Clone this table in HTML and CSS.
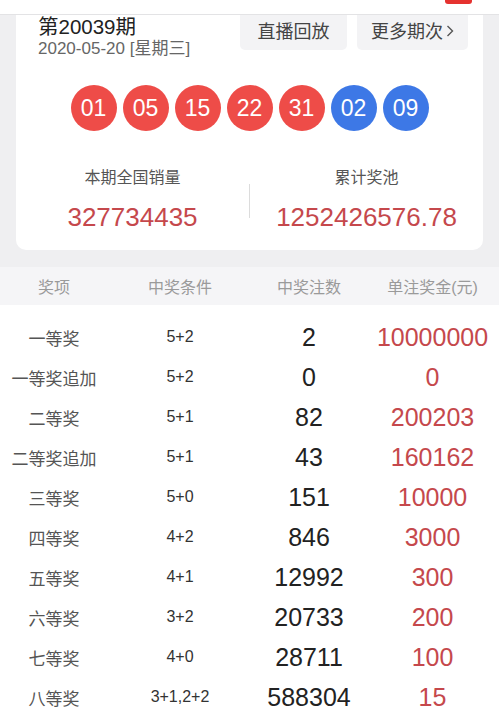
FILE: index.html
```html
<!DOCTYPE html>
<html lang="zh-CN">
<head>
<meta charset="utf-8">
<title>开奖详情</title>
<link rel="stylesheet" href="styles.css">
</head>
<body>
<div class="topbar"><span class="badge"></span></div>
<section class="card">
  <div class="head">
    <div class="issue">
      <div class="issue-no">第20039期</div>
      <div class="issue-date">2020-05-20 [星期三]</div>
    </div>
    <div class="actions">
      <span class="btn">直播回放</span>
      <span class="btn">更多期次<svg class="chev" viewBox="0 0 8 14" width="8" height="14"><path d="M1.5 2 L6.5 7 L1.5 12" fill="none" stroke="#555" stroke-width="1.4"/></svg></span>
    </div>
  </div>
  <div class="balls">
    <span class="ball red">01</span>
    <span class="ball red">05</span>
    <span class="ball red">15</span>
    <span class="ball red">22</span>
    <span class="ball red">31</span>
    <span class="ball blue">02</span>
    <span class="ball blue">09</span>
  </div>
  <div class="stats">
    <div class="stat">
      <div class="stat-label">本期全国销量</div>
      <div class="stat-value">327734435</div>
    </div>
    <div class="divider"></div>
    <div class="stat">
      <div class="stat-label">累计奖池</div>
      <div class="stat-value">1252426576.78</div>
    </div>
  </div>
</section>
<section class="table">
  <div class="thead">
    <span>奖项</span><span>中奖条件</span><span>中奖注数</span><span>单注奖金(元)</span>
  </div>
  <div class="tbody">
    <div class="row"><span class="c1">一等奖</span><span class="c2">5+2</span><span class="c3">2</span><span class="c4">10000000</span></div>
    <div class="row"><span class="c1">一等奖追加</span><span class="c2">5+2</span><span class="c3">0</span><span class="c4">0</span></div>
    <div class="row"><span class="c1">二等奖</span><span class="c2">5+1</span><span class="c3">82</span><span class="c4">200203</span></div>
    <div class="row"><span class="c1">二等奖追加</span><span class="c2">5+1</span><span class="c3">43</span><span class="c4">160162</span></div>
    <div class="row"><span class="c1">三等奖</span><span class="c2">5+0</span><span class="c3">151</span><span class="c4">10000</span></div>
    <div class="row"><span class="c1">四等奖</span><span class="c2">4+2</span><span class="c3">846</span><span class="c4">3000</span></div>
    <div class="row"><span class="c1">五等奖</span><span class="c2">4+1</span><span class="c3">12992</span><span class="c4">300</span></div>
    <div class="row"><span class="c1">六等奖</span><span class="c2">3+2</span><span class="c3">20733</span><span class="c4">200</span></div>
    <div class="row"><span class="c1">七等奖</span><span class="c2">4+0</span><span class="c3">28711</span><span class="c4">100</span></div>
    <div class="row"><span class="c1">八等奖</span><span class="c2">3+1,2+2</span><span class="c3">588304</span><span class="c4">15</span></div>
  </div>
</section>
</body>
</html>
```
FILE: styles.css
```css
* { box-sizing: border-box; }
html, body { margin: 0; padding: 0; }
body {
  width: 499px;
  height: 722px;
  overflow: hidden;
  background: #efeff1;
  font-family: "Liberation Sans", "Noto Sans CJK SC", sans-serif;
  color: #222;
}
.topbar {
  height: 15px;
  background: #fff;
  border-bottom: 1px solid #e3e3e5;
  position: relative;
}
.badge {
  position: absolute;
  left: 445px;
  top: 0;
  width: 27px;
  height: 4px;
  background: #e5322f;
  border-radius: 0 0 3px 3px;
}
.card {
  margin: 0 16px;
  background: #fff;
  border-radius: 0 0 10px 10px;
  padding-bottom: 18px;
}
.head {
  display: flex;
  justify-content: space-between;
  align-items: flex-start;
  padding: 0 15px 0 22px;
}
.issue-no {
  font-size: 20.5px;
  line-height: 24px;
  color: #222;
}
.issue-date {
  font-size: 17px;
  line-height: 20px;
  color: #666;
}
.actions {
  display: flex;
  gap: 10px;
}
.btn {
  display: flex;
  align-items: center;
  justify-content: center;
  gap: 3px;
  height: 35px;
  padding-bottom: 5px;
  background: #f3f3f5;
  border-radius: 0 0 5px 5px;
  font-size: 18px;
  color: #444;
}
.btn:first-child { width: 107px; }
.btn:last-child { width: 111px; }
.chev { margin-top: 2px; }
.balls {
  display: flex;
  justify-content: center;
  gap: 6px;
  margin-top: 26px;
}
.ball {
  width: 46px;
  height: 46px;
  border-radius: 50%;
  display: flex;
  align-items: center;
  justify-content: center;
  color: #fff;
  font-size: 23px;
}
.ball.red { background: #ee4c48; }
.ball.blue { background: #3d78e6; }
.stats {
  display: grid;
  grid-template-columns: 1fr 1px 1fr;
  margin-top: 35px;
}
.stat {
  display: flex;
  flex-direction: column;
  align-items: center;
  gap: 12px;
}
.stat-label {
  font-size: 16px;
  line-height: 24px;
  color: #555;
}
.stat-value {
  font-size: 26px;
  line-height: 30px;
  color: #c5484c;
}
.divider {
  align-self: center;
  height: 34px;
  margin-top: 4px;
  background: #dcdcdc;
}
.table {
  margin-top: 17px;
}
.thead, .row {
  display: grid;
  grid-template-columns: 108px 144px 114px 133px;
  align-items: center;
  justify-items: center;
}
.thead {
  height: 38px;
  background: #f5f5f7;
  font-size: 16px;
  color: #9a9a9a;
}
.tbody {
  background: #fff;
  padding-top: 12px;
  height: 417px;
}
.row { height: 40px; }
.c1 { font-size: 17px; color: #555; }
.c2 { font-size: 16px; color: #333; }
.c3 { font-size: 25px; color: #222; }
.c4 { font-size: 25px; color: #c5484c; }
```
